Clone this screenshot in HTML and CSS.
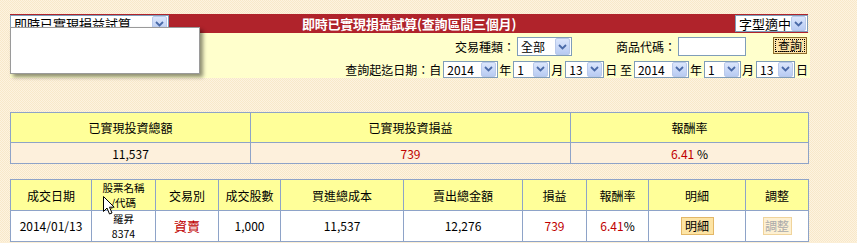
FILE: index.html
```html
<!DOCTYPE html>
<html lang="zh-Hant">
<head>
<meta charset="utf-8">
<title>即時已實現損益試算</title>
<link rel="stylesheet" href="styles.css">
</head>
<body>

<div class="page">

<div class="head">
	<span class="sel sel-func">即時已實現損益試算<span class="arr"><svg width="9" height="6" viewBox="0 0 9 6"><path d="M1 1 L4.5 4.5 L8 1" fill="none" stroke="#4a6aa8" stroke-width="1.8"/></svg></span></span>
	<h1>即時已實現損益試算(查詢區間三個月)</h1>
	<span class="sel sel-font">字型適中<span class="arr"><svg width="9" height="6" viewBox="0 0 9 6"><path d="M1 1 L4.5 4.5 L8 1" fill="none" stroke="#4a6aa8" stroke-width="1.8"/></svg></span></span>
</div>

<!-- open dropdown list of the function select -->
<div class="popup"></div>

<div class="query">
	<div class="qrow">
		<span>交易種類：</span>
		<span class="sel w55">全部<span class="arr"><svg width="9" height="6" viewBox="0 0 9 6"><path d="M1 1 L4.5 4.5 L8 1" fill="none" stroke="#4a6aa8" stroke-width="1.8"/></svg></span></span>
		<span class="gap44">商品代碼：</span>
		<span class="txt"></span>
		<button class="btn-q">查詢</button>
	</div>
	<div class="qrow row2">
		<span>查詢起迄日期：自</span>
		<span class="sel w55">2014<span class="arr"><svg width="9" height="6" viewBox="0 0 9 6"><path d="M1 1 L4.5 4.5 L8 1" fill="none" stroke="#4a6aa8" stroke-width="1.8"/></svg></span></span>
		<span>年</span>
		<span class="sel w37">1<span class="arr"><svg width="9" height="6" viewBox="0 0 9 6"><path d="M1 1 L4.5 4.5 L8 1" fill="none" stroke="#4a6aa8" stroke-width="1.8"/></svg></span></span>
		<span>月</span>
		<span class="sel w39">13<span class="arr"><svg width="9" height="6" viewBox="0 0 9 6"><path d="M1 1 L4.5 4.5 L8 1" fill="none" stroke="#4a6aa8" stroke-width="1.8"/></svg></span></span>
		<span>日 至</span>
		<span class="sel w55">2014<span class="arr"><svg width="9" height="6" viewBox="0 0 9 6"><path d="M1 1 L4.5 4.5 L8 1" fill="none" stroke="#4a6aa8" stroke-width="1.8"/></svg></span></span>
		<span>年</span>
		<span class="sel w37">1<span class="arr"><svg width="9" height="6" viewBox="0 0 9 6"><path d="M1 1 L4.5 4.5 L8 1" fill="none" stroke="#4a6aa8" stroke-width="1.8"/></svg></span></span>
		<span>月</span>
		<span class="sel w39">13<span class="arr"><svg width="9" height="6" viewBox="0 0 9 6"><path d="M1 1 L4.5 4.5 L8 1" fill="none" stroke="#4a6aa8" stroke-width="1.8"/></svg></span></span>
		<span>日</span>
	</div>
</div>

<table class="grid summary">
	<tr class="th">
		<td class="c1">已實現投資總額</td>
		<td class="c2">已實現投資損益</td>
		<td>報酬率</td>
	</tr>
	<tr class="tdr">
		<td>11,537</td>
		<td class="red">739</td>
		<td><span class="red">6.41</span> %</td>
	</tr>
</table>

<table class="grid detail">
	<tr class="th">
		<td style="width:80px">成交日期</td>
		<td style="width:63px" class="two">股票名稱<br>/代碼</td>
		<td style="width:62px">交易別</td>
		<td style="width:61px">成交股數</td>
		<td style="width:122px">買進總成本</td>
		<td style="width:118px">賣出總金額</td>
		<td style="width:63px">損益</td>
		<td style="width:61px">報酬率</td>
		<td style="width:96px">明細</td>
		<td>調整</td>
	</tr>
	<tr class="tdw">
		<td>2014/01/13</td>
		<td class="two">羅昇<br>8374</td>
		<td class="red big">資賣</td>
		<td>1,000</td>
		<td>11,537</td>
		<td>12,276</td>
		<td class="red">739</td>
		<td><span class="red">6.41</span>%</td>
		<td><button class="btn-s">明細</button></td>
		<td><button class="btn-s off">調整</button></td>
	</tr>
</table>

<!-- mouse pointer caught in the screenshot -->
<svg class="cursor" width="12" height="19" viewBox="0 0 12 19"><path d="M0.5 0.5 L0.5 15.5 L4 12 L6.5 18 L9 17 L6.5 11.2 L11.2 11.2 Z" fill="#fff" stroke="#000" stroke-width="1"/></svg>

</div>

</body>
</html>
```

FILE: styles.css
```css
html { background: #fbeed5; }

body {
	margin: 0;
	padding: 14px 0 0 10px;
	font-family: "Noto Sans CJK TC", "Liberation Sans", sans-serif;
	font-size: 12px;
	color: #000;
	background-color: #fbeed5;
	background-image: repeating-conic-gradient(#fdf3e1 0 25%, #f8e8c9 0 50%);
	background-size: 2px 2px;
}

.page { position: relative; width: 800px; }

/* title bar */
.head {
	display: grid;
	grid-template-columns: 1fr auto 1fr;
	align-items: center;
	width: 798px;
	height: 19px;
	background: #b0232b;
}
.head h1 {
	margin: 0;
	color: #fff;
	font-size: 13px;
	font-weight: bold;
	line-height: 19px;
	letter-spacing: -0.2px;
}
.sel-func { justify-self: start; width: 159px; height: 18px; font-size: 13px; }
.sel-font { justify-self: end; width: 73px; height: 18px; font-size: 13px; }

.popup {
	position: absolute;
	left: 0;
	top: 13px;
	width: 188px;
	height: 45px;
	background: #fff;
	border: 1px solid #9a9a9a;
	box-shadow: 3px 3px 4px rgba(0, 0, 0, 0.45);
}

/* fake select boxes */
.sel {
	display: inline-flex;
	align-items: center;
	justify-content: space-between;
	box-sizing: border-box;
	height: 17px;
	padding: 0 1px 0 3px;
	background: #fff;
	border: 1px solid #7f9db9;
	line-height: 15px;
	white-space: nowrap;
}
.sel .arr {
	display: flex;
	align-items: center;
	justify-content: center;
	width: 13px;
	height: 13px;
	border: 1px solid #b9c9ea;
	border-radius: 2px;
	background: linear-gradient(#dbe6fc, #b8cbf2);
}
.w55 { width: 55px; }
.w37 { width: 37px; }
.w39 { width: 39px; }

/* query panel */
.query {
	display: flex;
	flex-direction: column;
	align-items: flex-end;
	height: 45px;
	box-sizing: border-box;
	padding: 4px 0 0 0;
	background: #ffffcc;
}
.qrow {
	display: flex;
	align-items: center;
	height: 19px;
	margin-right: 3px;
}
.qrow .sel { height: 19px; margin-left: 2px; }
.qrow .sel .arr { height: 15px; }
.row2 { margin-top: 4px; height: 18px; margin-right: 2px; }
.row2 .sel { height: 17px; margin: 0 1px 0 2px; }
.row2 .sel .arr { height: 13px; }
.gap44 { margin-left: 44px; }
.txt {
	display: inline-block;
	width: 68px;
	height: 19px;
	box-sizing: border-box;
	margin-left: 2px;
	background: #fff;
	border: 1px solid #7f9db9;
}
.btn-q {
	margin: -3px 0 0 27px;
	width: 34px;
	height: 17px;
	padding: 0;
	font: 12px "Noto Sans CJK TC", sans-serif;
	line-height: 13px;
	background: #fde3a7;
	border: 1px solid #8a6b2a;
	outline: 1px dotted #000;
	outline-offset: -3px;
}

/* tables */
.grid {
	border-collapse: collapse;
	width: 799px;
	text-align: center;
}
.grid td { border: 1px solid #8ea3c8; padding: 0; }
.th td { background: #ffff99; height: 29px; line-height: 13px; }
.summary { margin-top: 34px; }
.summary .c1 { width: 239px; }
.summary .c2 { width: 319px; }
.summary .tdr td { background: #fdf0dc; height: 20px; }
.detail { margin-top: 15px; }
.tdw td { background: #fff; height: 28px; line-height: 12px; }
.grid td.two { font-size: 10.5px; line-height: 15px; }

.red { color: #c00000; }
.big { font-size: 13px; }

.btn-s {
	width: 33px;
	height: 18px;
	padding: 0;
	font: 12px "Noto Sans CJK TC", sans-serif;
	line-height: 14px;
	background: #fde4a4;
	border: 1px solid #e3b767;
}
.btn-s.off {
	width: 29px;
	color: #aaa;
	background: #fdf0d2;
	border-color: #f0d49c;
}

.cursor { position: absolute; left: 93px; top: 182px; }
```
